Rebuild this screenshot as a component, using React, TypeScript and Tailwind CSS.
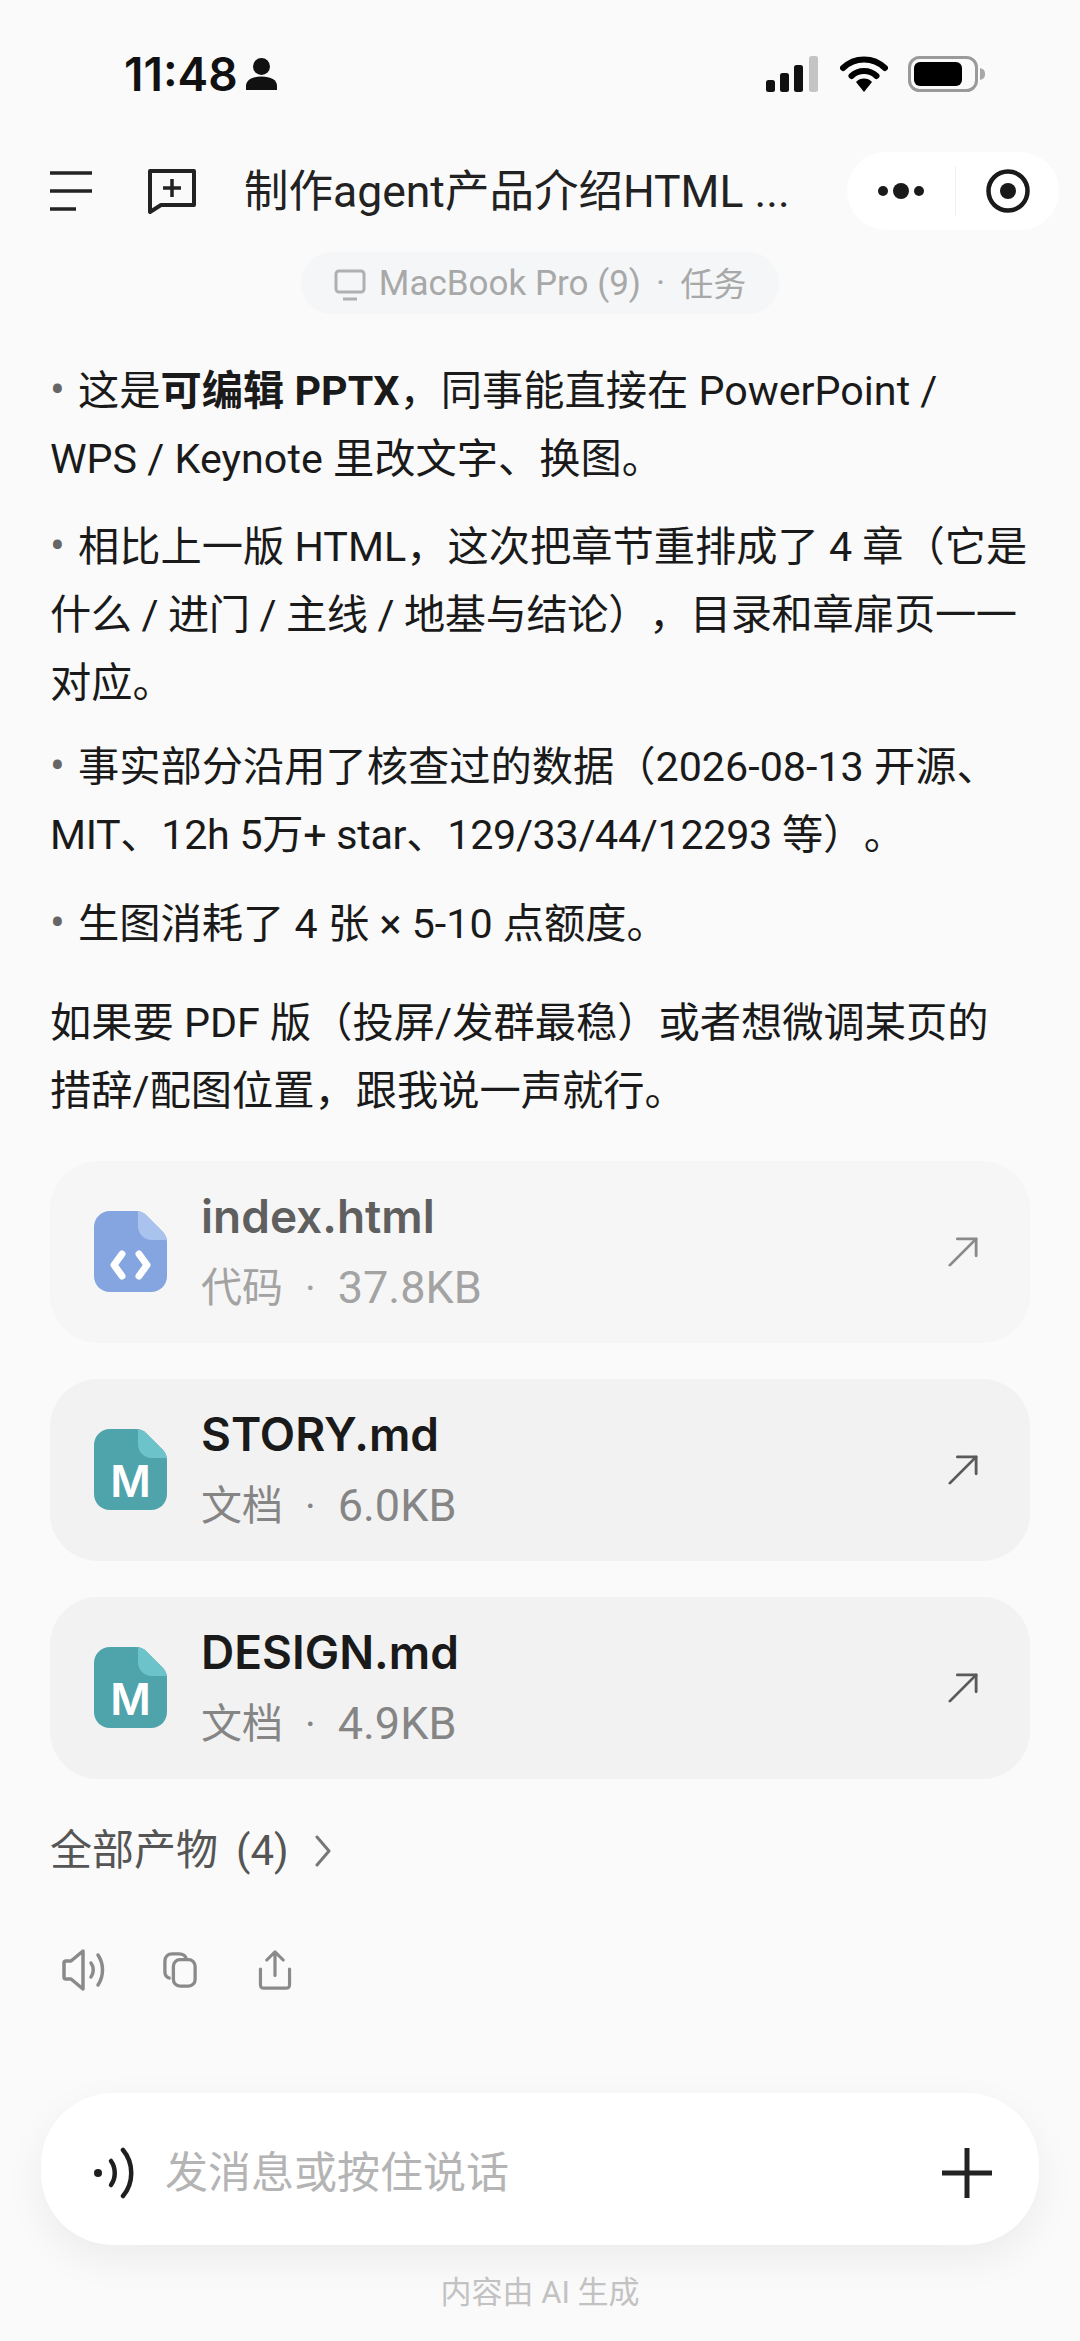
const FONT = "font-['Inter','Noto_Sans_CJK_SC',sans-serif]";
const BODY = "font-['Roboto','Noto_Sans_CJK_SC',sans-serif]";

const StatusIcons = () => (
  <div className="flex items-center">
    <svg width="54" height="36" viewBox="0 0 54 36">
      <rect x="0" y="24" width="9" height="12" rx="2.5" fill="#111" />
      <rect x="14" y="17" width="9" height="19" rx="2.5" fill="#111" />
      <rect x="28" y="9" width="9" height="27" rx="2.5" fill="#111" />
      <rect x="43" y="0" width="9" height="36" rx="2.5" fill="#c4c4c4" />
    </svg>
    <svg className="ml-[20px]" width="48" height="36" viewBox="0 0 48 36">
      <path d="M3 12 A30 30 0 0 1 45 12" fill="none" stroke="#000" strokeWidth="6" strokeLinecap="round" />
      <path d="M11.5 20 A18 18 0 0 1 36.5 20" fill="none" stroke="#000" strokeWidth="6" strokeLinecap="round" />
      <path d="M24 36 L16 26 A11 11 0 0 1 32 26 Z" fill="#000" />
    </svg>
    <svg className="ml-[20px]" width="78" height="36" viewBox="0 0 78 36">
      <rect x="1.5" y="1.5" width="67" height="33" rx="10" fill="none" stroke="#9a9a9a" strokeWidth="3" />
      <rect x="6" y="6" width="48" height="24" rx="6" fill="#000" />
      <path d="M72 12 C76 13 77 15 77 18 C77 21 76 23 72 24 Z" fill="#a8a8a8" />
    </svg>
  </div>
);

const FileIcon = ({ color, fold, kind }: { color: string; fold: string; kind: "code" | "md" }) => (
  <svg width="73" height="81" viewBox="0 0 73 81" className="shrink-0 -mt-[2px]">
    <path d="M16 0 H42 C46 0 49 1.500 52 4 L69 21 C71.500 24 73 27 73 31 V65 C73 74 66 81 57 81 H16 C7 81 0 74 0 65 V16 C0 7 7 0 16 0 Z" fill={color} />
    <path d="M44 0.300 C47 0.800 50 2 52 4 L69 21 C71 23 72.500 26 72.800 29 H58 C50 29 44 23 44 15 Z" fill={fold} />
    {kind === "code" ? (
      <g fill="none" stroke="#fff" strokeWidth="7" strokeLinecap="round" strokeLinejoin="round">
        <path d="M28 43 L20 54 L28 65" />
        <path d="M45 43 L53 54 L45 65" />
      </g>
    ) : (
      <text x="36.500" y="68" textAnchor="middle" fontSize="44" fontWeight="600" fill="#fff" fontFamily="Inter, sans-serif">M</text>
    )}
  </svg>
);

const FileCard = ({ name, type, size, faded, kind }: { name: string; type: string; size: string; faded?: boolean; kind: "code" | "md" }) => (
  <div className={`h-[182px] rounded-[48px] flex items-center pl-[44px] pr-[52px] ${faded ? "bg-[#f6f6f6]" : "bg-[#f2f2f2]"}`}>
    <FileIcon kind={kind} color={kind === "code" ? "#84a5e0" : "#4fa3ab"} fold={kind === "code" ? "#a9c3ee" : "#6cc3ca"} />
    <div className="ml-[34px] flex-1">
      <div className={`text-[46px] leading-[56px] font-semibold ${faded ? "text-[#5f5f5f]" : "text-[#1a1a1a]"}`}>{name}</div>
      <div className={`mt-[16px] flex items-center text-[41px] leading-[56px] ${BODY} ${faded ? "text-[#a3a3a3]" : "text-[#858585]"}`}>
        {type}
        <span className="mx-[22px]">·</span>
        <span className="text-[45px]">{size}</span>
      </div>
    </div>
    <svg width="30" height="30" viewBox="0 0 32 32" fill="none" stroke={faded ? "#8a8a8a" : "#5a5a5a"} strokeWidth="3" strokeLinecap="round" strokeLinejoin="round">
      <path d="M2 30 L30 2" />
      <path d="M10 2 H30 V20" />
    </svg>
  </div>
);

const Bullet = () => <span className="inline-block w-[28px] text-[44px] leading-none text-[#666]">•</span>;

export default function App() {
  return (
    <div className={`${FONT} [text-spacing-trim:space-all] h-[2341px] w-[1080px] overflow-hidden bg-[#fafafa] text-[#1a1a1a] flex flex-col`}>
      {/* status bar */}
      <div className="mt-[52px] h-[44px] pl-[124px] pr-[94px] flex items-center justify-between">
        <div className="flex items-center">
          <span className="text-[46px] font-semibold leading-none text-[#111]">11:48</span>
          <svg className="ml-[8px]" width="31" height="32" viewBox="0 0 31 32" fill="#111">
            <ellipse cx="15.500" cy="8.500" rx="8.500" ry="8.500" />
            <path d="M0 32 V28 C0 22 6 18.500 15.500 18.500 C25 18.500 31 22 31 28 V32 Z" />
          </svg>
        </div>
        <StatusIcons />
      </div>

      {/* header */}
      <div className="mt-[56px] h-[78px] pl-[50px] pr-[21px] flex items-center">
        <svg width="42" height="40" viewBox="0 0 42 40" stroke="#222" strokeWidth="3.500" className="shrink-0">
          <path d="M0 2 H42" />
          <path d="M0 20 H42" />
          <path d="M0 38 H26" />
        </svg>
        <svg className="ml-[56px] shrink-0" width="48" height="46" viewBox="0 0 48 46" fill="none" stroke="#222" strokeWidth="4" strokeLinejoin="round">
          <path d="M2 3 H46 V37 H13 L2 44 Z" />
          <path d="M24 11 V29 M15 20 H33" strokeWidth="3.500" />
        </svg>
        <div className={`ml-[48px] pt-[3px] flex-1 text-[44.5px] leading-none whitespace-nowrap text-[#222] ${BODY}`}>制作agent产品介绍HTML ...</div>
        <div className="w-[212px] h-[78px] rounded-full bg-white flex items-center shrink-0">
          <div className="w-[108px] flex justify-center">
            <svg width="46" height="20" viewBox="0 0 46 20" fill="#1a1a1a">
              <circle cx="5" cy="10" r="5" />
              <circle cx="23" cy="10" r="8" />
              <circle cx="41" cy="10" r="5" />
            </svg>
          </div>
          <div className="w-px h-[50px] bg-[#efefef]" />
          <div className="flex-1 flex justify-center">
            <svg width="44" height="44" viewBox="0 0 44 44">
              <circle cx="22" cy="22" r="19.500" fill="none" stroke="#1a1a1a" strokeWidth="4.500" />
              <circle cx="22" cy="22" r="8" fill="#1a1a1a" />
            </svg>
          </div>
        </div>
      </div>

      {/* device pill */}
      <div className="mt-[22px] flex justify-center">
        <div className={`h-[62px] w-[478px] pt-[3px] rounded-full bg-[#f5f6f7] flex items-center justify-center text-[35px] text-[#a8a8a8] whitespace-nowrap ${BODY}`}>
          <svg width="32" height="34" viewBox="0 0 32 34" fill="none" stroke="#b0b0b0" strokeWidth="3" strokeLinejoin="round" className="mr-[13px]">
            <rect x="2" y="3" width="28" height="21" rx="3" />
            <path d="M9 31 H23" />
          </svg>
          MacBook Pro (9)
          <span className="mx-[15px]">·</span>
          <span className="text-[33px]">任务</span>
        </div>
      </div>

      {/* message */}
      <div className={`mt-[43px] px-[50px] text-[41.25px] leading-[68px] whitespace-nowrap ${BODY}`}>
        <p>
          <Bullet />这是<b className="font-bold">可编辑 PPTX</b>，同事能直接在 PowerPoint /<br />
          WPS / Keynote 里改文字、换图。
        </p>
        <p className="mt-[20px]">
          <Bullet />相比上一版 HTML，这次把章节重排成了 4 章（它是<br />
          <span className="tracking-[-0.4px]">什么 / 进门 / 主线 / 地基与结论），目录和章扉页一一</span><br />
          对应。
        </p>
        <p className="mt-[16px]">
          <Bullet />事实部分沿用了核查过的数据（2026-08-13 开源、<br />
          <span className="tracking-[-0.3px]">MIT、12h 5万+ star、129/33/44/12293 等）。</span>
        </p>
        <p className="mt-[21px]">
          <Bullet />生图消耗了 4 张 × 5-10 点额度。
        </p>
        <p className="mt-[31px]">
          如果要 PDF 版（投屏/发群最稳）或者想微调某页的<br />
          措辞/配图位置，跟我说一声就行。
        </p>
      </div>

      {/* files */}
      <div className="mt-[36px] px-[50px] flex flex-col gap-[36px]">
        <FileCard faded kind="code" name="index.html" type="代码" size="37.8KB" />
        <FileCard kind="md" name="STORY.md" type="文档" size="6.0KB" />
        <FileCard kind="md" name="DESIGN.md" type="文档" size="4.9KB" />
      </div>

      <div className={`mt-[38px] pl-[50px] flex items-center text-[42px] leading-[68px] text-[#555] ${BODY}`}>
        全部产物
        <span className="ml-[18px]">(4)</span>
        <svg className="ml-[26px]" width="16" height="32" viewBox="0 0 16 32" fill="none" stroke="#777" strokeWidth="3" strokeLinecap="round" strokeLinejoin="round">
          <path d="M2 2 L14 16 L2 30" />
        </svg>
      </div>

      {/* actions */}
      <div className="mt-[63px] h-[44px] pl-[62px] flex items-center text-[#8a8a8a]">
        <svg width="44" height="42" viewBox="0 0 44 42" fill="none" stroke="currentColor" strokeWidth="3.500" strokeLinecap="round" strokeLinejoin="round">
          <path d="M21 2 L9 12 H4 C2.500 12 2 13 2 14 V28 C2 29 2.500 30 4 30 H9 L21 40 Z" />
          <path d="M29 14 C32 18 32 24 29 28" />
          <path d="M36 6 C42 15 42 27 36 36" />
        </svg>
        <svg className="ml-[57px]" width="34" height="36" viewBox="0 0 36 38" fill="none" stroke="currentColor" strokeWidth="3.500" strokeLinejoin="round">
          <rect x="11" y="8" width="23" height="28" rx="7" />
          <path d="M8 28 C4 27 2 24 2 21 V10 C2 5 5 2 10 2 H17 C21 2 24 4 25 8" />
        </svg>
        <svg className="ml-[61px]" width="34" height="40" viewBox="0 0 36 44" fill="none" stroke="currentColor" strokeWidth="3.500" strokeLinecap="round" strokeLinejoin="round">
          <path d="M18 28 V3 M9 11 L18 2 L27 11" />
          <path d="M2 21 V38 C2 41 3 42 6 42 H30 C33 42 34 41 34 38 V21" />
        </svg>
      </div>

      {/* input */}
      <div className="mt-[101px] mx-[41px] h-[152px] pt-[8px] shrink-0 rounded-[72px] bg-white shadow-[0_14px_40px_rgba(0,0,0,0.06)] flex items-center pl-[52px] pr-[47px]">
        <svg width="44" height="52" viewBox="0 0 44 52" fill="none" stroke="#1f1f1f" strokeWidth="4.500" strokeLinecap="round" className="shrink-0">
          <circle cx="5" cy="26" r="4" fill="#1f1f1f" stroke="none" />
          <path d="M18 14 C23 21 23 31 18 38" />
          <path d="M30 3 C41 16 41 36 30 49" />
        </svg>
        <div className={`ml-[28px] flex-1 text-[43px] text-[#b4b4b4] ${BODY}`}>发消息或按住说话</div>
        <svg width="50" height="50" viewBox="0 0 50 50" stroke="#222" strokeWidth="5" className="shrink-0">
          <path d="M25 0 V50 M0 25 H50" />
        </svg>
      </div>

      <div className={`mt-[30px] text-center text-[31px] leading-[36px] text-[#c2c2c2] ${BODY}`}>内容由 AI 生成</div>
    </div>
  );
}
